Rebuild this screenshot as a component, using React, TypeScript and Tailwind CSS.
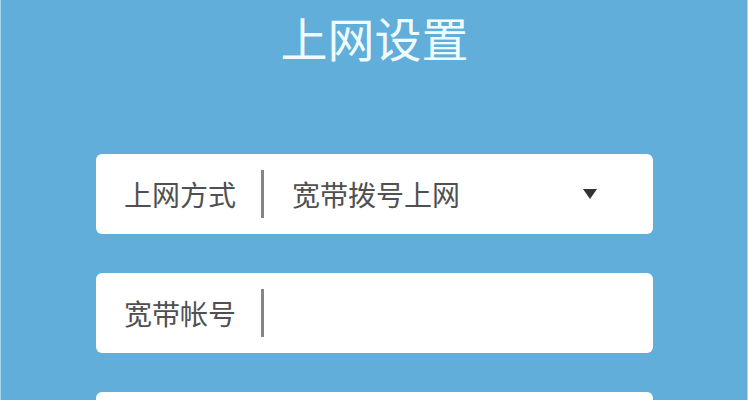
import { useState } from "react";
import type { ReactNode } from "react";

type FieldRowProps = {
  id: string;
  label?: string;
  children: ReactNode;
};

function FieldRow({ id, label, children }: FieldRowProps) {
  return (
    <div className="flex h-20 shrink-0 items-center rounded-md bg-white pl-7">
      {label && (
        <>
          <label htmlFor={id} className="shrink-0 whitespace-nowrap">
            {label}
          </label>
          <span aria-hidden="true" className="ml-[25px] h-12 w-[3px] shrink-0 bg-[#858585]" />
        </>
      )}
      {children}
    </div>
  );
}

export default function App() {
  const [mode, setMode] = useState("pppoe");
  const [account, setAccount] = useState("");
  const [password, setPassword] = useState("");

  return (
    <main className="h-screen overflow-hidden border-x border-[#a9d5ea] bg-[#60aed9] pr-[94px] pl-[95px] font-['Noto_Sans_CJK_SC',sans-serif] text-[28px] leading-10 text-[#505050]">
      <h1 className="pt-1 text-center text-[47px] leading-[66px] font-normal text-[#effcff]">
        上网设置
      </h1>
      <form className="mt-[84px] flex flex-col gap-[39px]">
        <FieldRow id="mode" label="上网方式">
          <div className="relative flex h-full min-w-0 flex-1 items-center">
            <select
              id="mode"
              value={mode}
              onChange={(e) => setMode(e.target.value)}
              className="h-full w-full appearance-none rounded-r-md bg-transparent pr-20 pl-7 outline-none"
            >
              <option value="pppoe">宽带拨号上网</option>
            </select>
            <svg
              aria-hidden="true"
              viewBox="0 0 14 10"
              className="pointer-events-none absolute right-14 h-[10px] w-[14px] fill-[#333333]"
            >
              <path d="M0 0h14L7 10z" />
            </svg>
          </div>
        </FieldRow>
        <FieldRow id="account" label="宽带帐号">
          <input
            id="account"
            type="text"
            value={account}
            onChange={(e) => setAccount(e.target.value)}
            className="h-full min-w-0 flex-1 rounded-r-md bg-transparent px-7 outline-none"
          />
        </FieldRow>
        <FieldRow id="password">
          <input
            id="password"
            type="password"
            aria-label="宽带密码"
            value={password}
            onChange={(e) => setPassword(e.target.value)}
            className="h-full min-w-0 flex-1 rounded-r-md bg-transparent pr-7 outline-none"
          />
        </FieldRow>
      </form>
    </main>
  );
}
